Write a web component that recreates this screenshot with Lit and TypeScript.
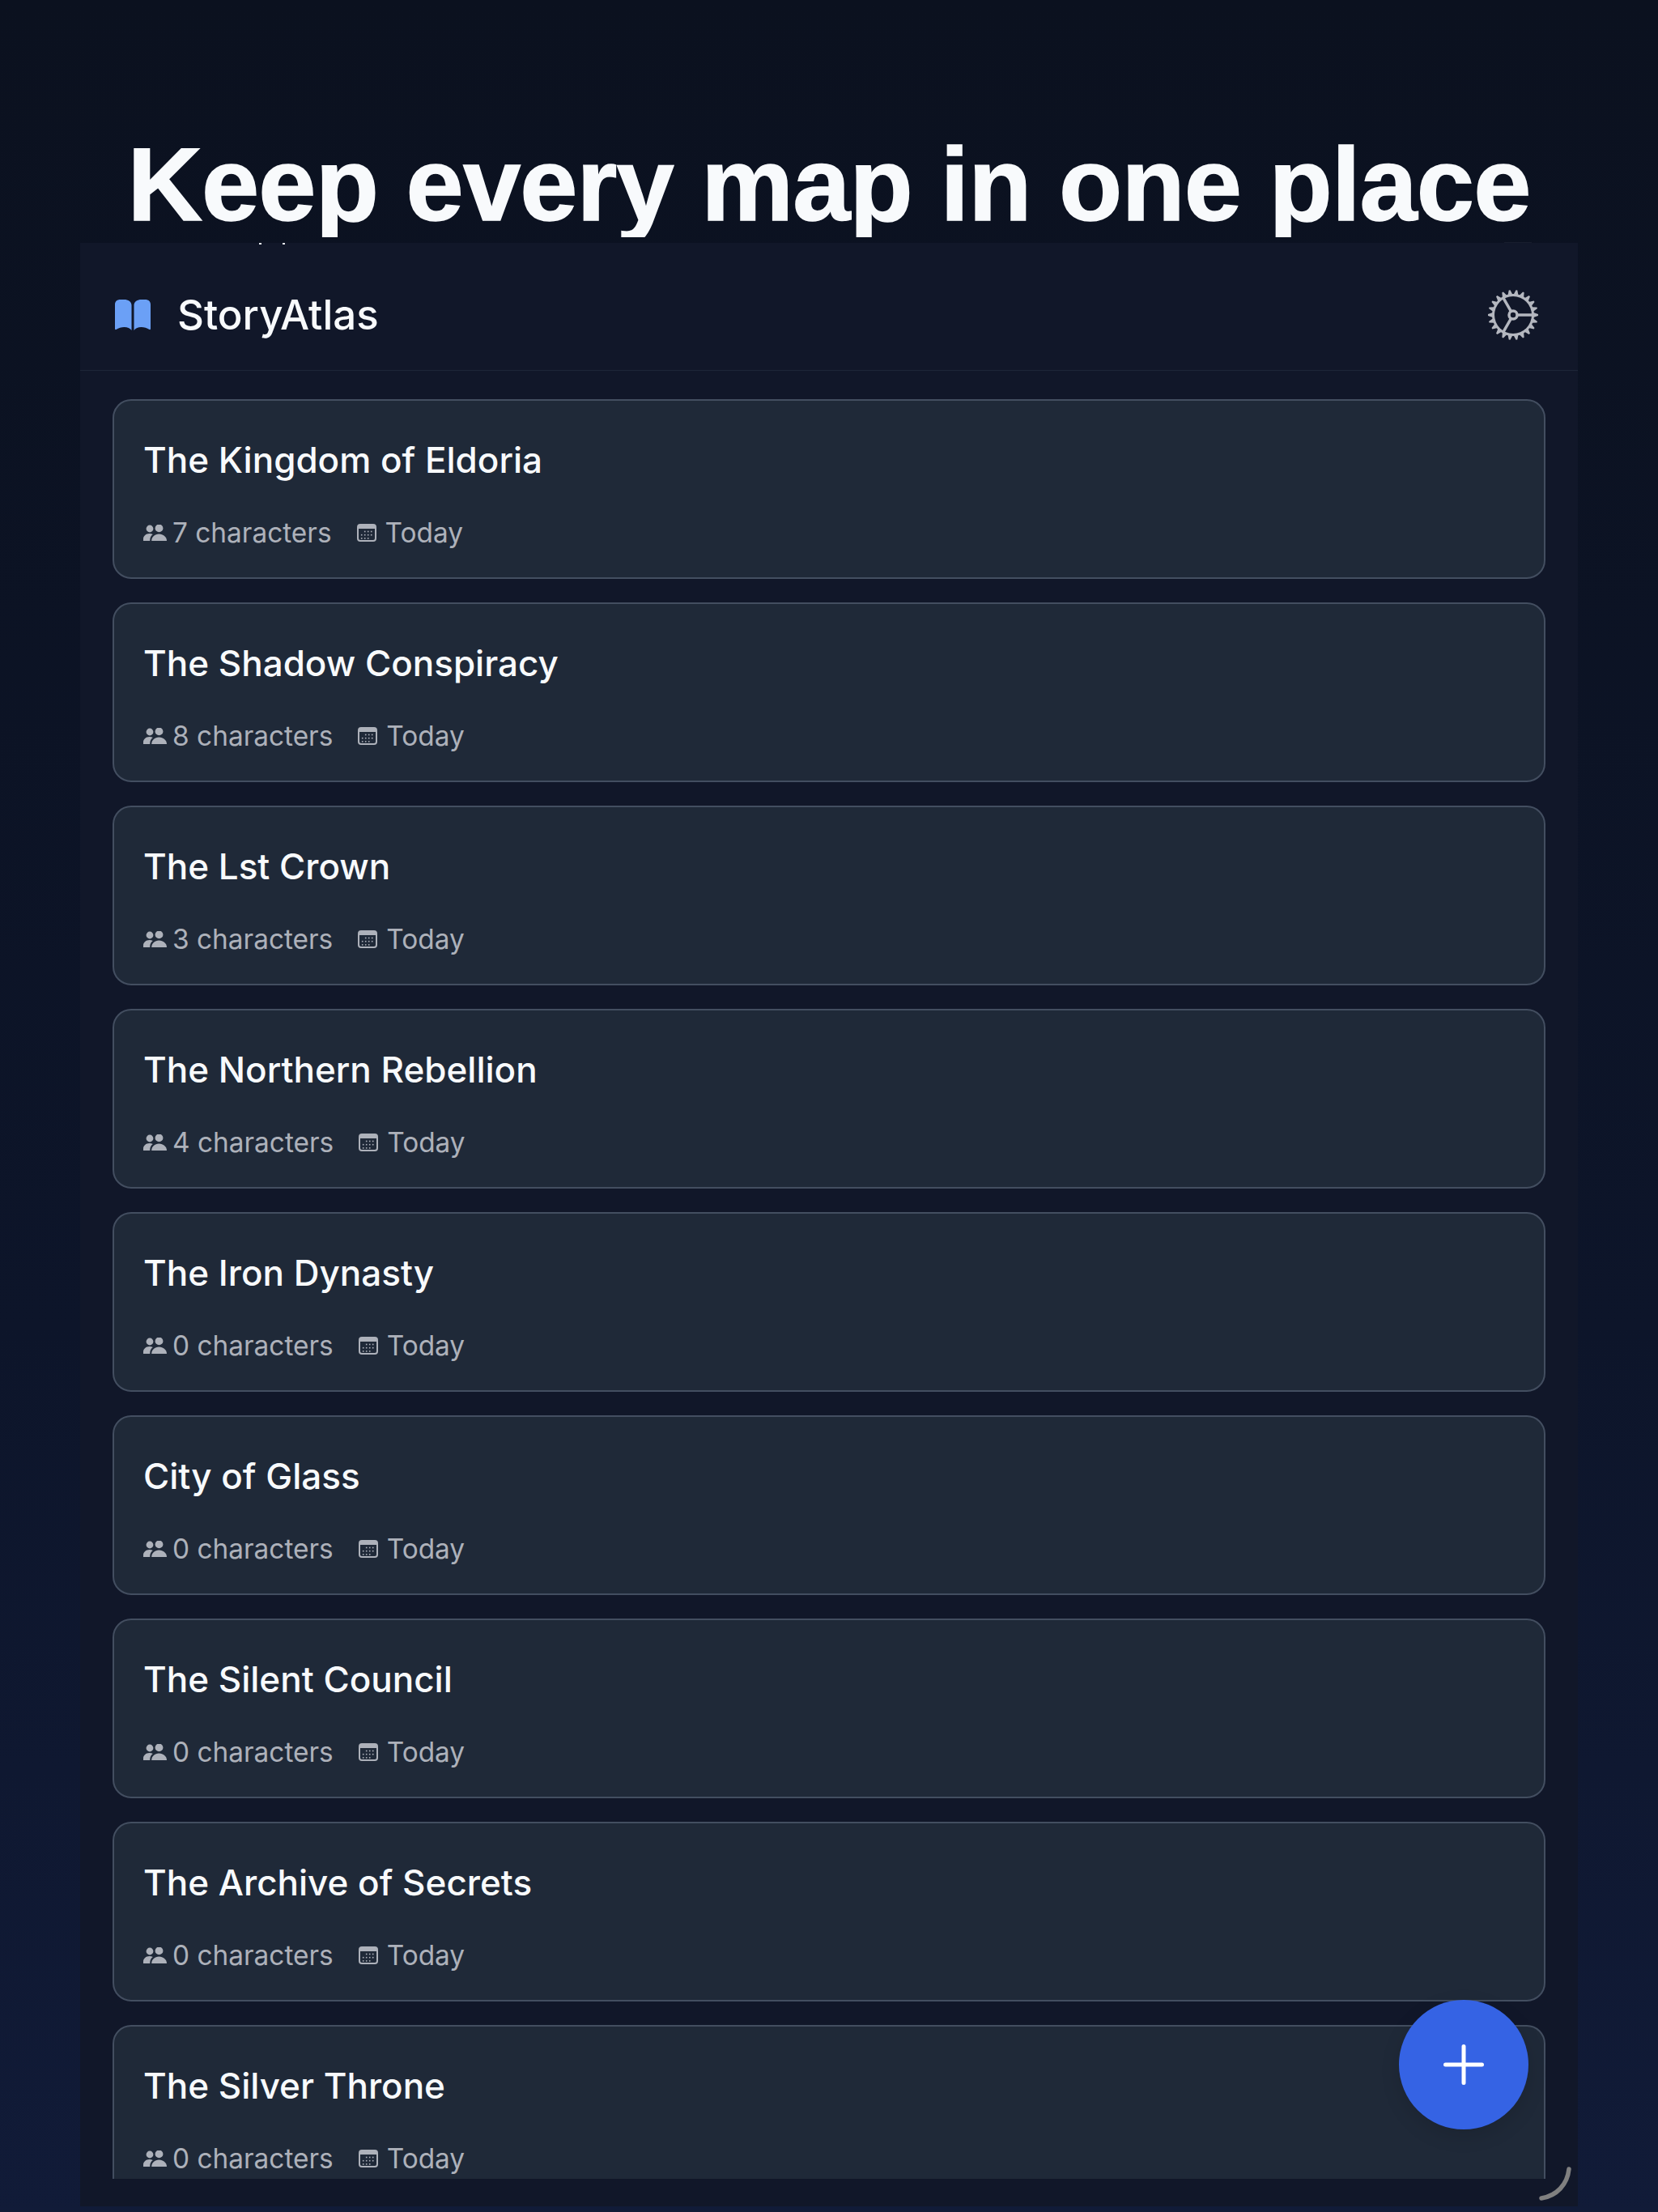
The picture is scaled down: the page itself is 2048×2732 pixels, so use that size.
import { LitElement, html, css, svg } from "lit";
import { customElement } from "lit/decorators.js";

interface story {
  title: string;
  count: number;
}

const stories: story[] = [
  { title: "The Kingdom of Eldoria", count: 7 },
  { title: "The Shadow Conspiracy", count: 8 },
  { title: "The Lst Crown", count: 3 },
  { title: "The Northern Rebellion", count: 4 },
  { title: "The Iron Dynasty", count: 0 },
  { title: "City of Glass", count: 0 },
  { title: "The Silent Council", count: 0 },
  { title: "The Archive of Secrets", count: 0 },
  { title: "The Silver Throne", count: 0 },
];

// teeth of the settings cog, built around a 64x64 box
function gearPath(teeth: number) {
  const pts: string[] = [];
  const step = (Math.PI * 2) / teeth;
  for (let i = 0; i < teeth; i++) {
    const a = i * step;
    const p = (r: number, da: number) =>
      `${(32 + r * Math.cos(a + da)).toFixed(2)} ${(32 + r * Math.sin(a + da)).toFixed(2)}`;
    pts.push(`${i === 0 ? "M" : "L"}${p(26, -step * 0.36)}`);
    pts.push(`L${p(31, -step * 0.1)}`);
    pts.push(`L${p(31, step * 0.1)}`);
    pts.push(`L${p(26, step * 0.36)}`);
  }
  return pts.join(" ") + "Z";
}

const peopleIcon = html`<svg class="people" viewBox="0 0 29 20" fill="currentColor">
  <circle cx="8" cy="5" r="4.4"></circle>
  <circle cx="19.5" cy="4.4" r="4.9"></circle>
  <path d="M0 20v-2.2C0 13.8 3.4 11 7.6 11c1.6 0 3 .4 4.2 1.1C9.6 13.6 8.2 15.8 8.2 20Z"></path>
  <path d="M10.2 20c0-4.800 4-8.400 9.200-8.400S29 15.200 29 20Z"></path>
</svg>`;

const calendarDots: number[][] = [
  [9.7, 13.7, 17.7],
  [5.7, 9.7, 13.7, 17.7],
  [5.7, 9.7, 13.7],
];

const calendarIcon = html`<svg class="calendar" viewBox="0 0 24 22">
  <rect x="1" y="1" width="22" height="20" rx="3" fill="none" stroke="currentColor" stroke-width="2"></rect>
  <path d="M1 4a3 3 0 0 1 3-3h16a3 3 0 0 1 3 3v2H1Z" fill="currentColor"></path>
  ${calendarDots.map((row, r) =>
    row.map(
      (x) => svg`<rect x=${x - 0.8} y=${8.7 + r * 4.2} width="1.600" height="1.600" fill="currentColor"></rect>`
    )
  )}
</svg>`;

@customElement("app-root")
export class AppRoot extends LitElement {
  static styles = css`
    :host {
      display: block;
      position: relative;
      width: 2048px;
      height: 2732px;
      overflow: hidden;
      background: linear-gradient(180deg, #0b111f 0%, #0d152a 60%, #111b38 100%);
      font-family: Inter, "Liberation Sans", sans-serif;
    }
    .hero {
      height: 300px;
      overflow: hidden;
      text-align: center;
      box-sizing: border-box;
      padding-top: 156px;
    }
    h1 {
      margin: 0;
      height: 137px;
      overflow: hidden;
      font-family: "Liberation Sans", Arial, sans-serif;
      font-size: 128px;
      line-height: 143px;
      font-weight: 700;
      letter-spacing: -0.9px;
      -webkit-text-stroke: 1.5px #f8fafc;
      color: #f8fafc;
      white-space: nowrap;
    }
    .panel {
      position: relative;
      display: flex;
      flex-direction: column;
      margin: 0 99px;
      height: 2425px;
      background: #111729;
    }
    .speck {
      position: absolute;
      top: 0;
      width: 3px;
      height: 2px;
      background: #e8eaee;
    }
    .notch {
      position: absolute;
      top: -1px;
      left: 1759px;
      width: 34px;
      height: 1px;
      background: #181e2e;
    }
    header {
      display: flex;
      align-items: center;
      box-sizing: border-box;
      height: 158px;
      padding: 20px 48px 0 43px;
      border-bottom: 1px solid #1e2638;
      flex: none;
    }
    .book {
      width: 44px;
      height: 38px;
      color: #6ba0f6;
      margin-right: 33px;
    }
    .brand {
      flex: 1;
      font-size: 51px;
      font-weight: 500;
      color: #f8fafc;
    }
    .gear {
      width: 64px;
      height: 64px;
      color: #b4b7bf;
    }
    .list {
      display: flex;
      flex-direction: column;
      gap: 29px;
      padding: 35px 40px 0;
      height: 2233px;
      box-sizing: border-box;
      overflow: hidden;
      flex: none;
    }
    .card {
      flex: none;
      box-sizing: border-box;
      height: 222px;
      padding: 45px 36px 0;
      background: #1f2938;
      border: 2px solid #434e60;
      border-radius: 23px;
    }
    .title {
      font-size: 44px;
      line-height: 56px;
      font-weight: 500;
      color: #f8fafc;
    }
    .meta {
      display: flex;
      align-items: center;
      margin-top: 40px;
      font-size: 33.4px;
      line-height: 44px;
      color: #adb1ba;
    }
    .people {
      width: 29px;
      height: 20px;
      margin-right: 7px;
    }
    .calendar {
      width: 24px;
      height: 22px;
      margin: 0 11px 0 31px;
    }
    .fab {
      position: absolute;
      left: 1629px;
      top: 2170px;
      width: 160px;
      height: 160px;
      border-radius: 50%;
      background: #3563e4;
      box-shadow: 0 8px 24px rgba(0, 0, 0, 0.12);
      display: flex;
      align-items: center;
      justify-content: center;
    }
    .fab svg {
      width: 50px;
      height: 50px;
    }
    .corner {
      position: absolute;
      right: 8px;
      bottom: 7px;
      width: 40px;
      height: 42px;
    }
  `;

  render() {
    return html`
      <div class="hero"><h1>Keep every map in one place</h1></div>
      <div class="panel">
        <span class="speck" style="left: 221px"></span>
        <span class="speck" style="left: 250px"></span>
        <span class="notch"></span>
        <header>
          <svg class="book" viewBox="0 0 44 38" fill="currentColor">
            <path d="M0 6C0 2 3 0 6.500 0h5C16 0 20.500 2.500 20.500 7v31c-2-2.500-5-4-9-4-3.500 0-7 1-10 3-.8.400-1.500 0-1.500-1Z"></path>
            <path d="M44 6c0-4-3-6-6.500-6h-5C28 0 23.500 2.500 23.500 7v31c2-2.500 5-4 9-4 3.500 0 7 1 10 3 .8.400 1.500 0 1.500-1Z"></path>
          </svg>
          <div class="brand">StoryAtlas</div>
          <svg class="gear" viewBox="0 0 64 64" fill="none" stroke="currentColor">
            <path d=${gearPath(22)} fill="currentColor" stroke="none"></path>
            <circle cx="32" cy="32" r="23" fill="#111729" stroke="none"></circle>
            <circle cx="32" cy="32" r="5" stroke-width="3.500"></circle>
            <path d="M37 32H56M29.500 27.700 20 11.200M29.500 36.300 20 52.800" stroke-width="3.500"></path>
          </svg>
        </header>
        <div class="list">
          ${stories.map(
            (s) => html`
              <div class="card">
                <div class="title">${s.title}</div>
                <div class="meta">
                  ${peopleIcon}<span>${s.count} characters</span>
                  ${calendarIcon}<span>Today</span>
                </div>
              </div>
            `
          )}
        </div>
        <div class="fab">
          <svg viewBox="0 0 50 50" fill="none" stroke="#fff" stroke-width="5" stroke-linecap="round">
            <path d="M25 2.500V47.500M2.500 25H47.500"></path>
          </svg>
        </div>
        <svg class="corner" viewBox="0 0 40 42" fill="none" stroke="#808080" stroke-width="5.500" stroke-linecap="round">
          <path d="M37 3C35 22 22 36 3 39"></path>
        </svg>
      </div>
    `;
  }
}
